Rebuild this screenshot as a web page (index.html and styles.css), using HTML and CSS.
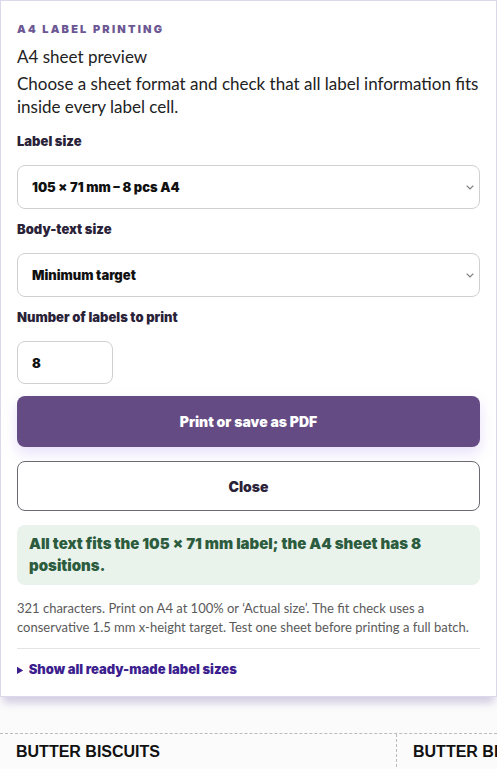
FILE: index.html
```html
<!DOCTYPE html>
<html lang="en">
<head>
    <meta charset="UTF-8">
    <meta name="viewport" content="width=device-width, initial-scale=1.0">
    <title>A4 label printing</title>
    <link rel="stylesheet" href="styles.css">
</head>
<body>
    <div class="panel">
        <p class="eyebrow">A4 LABEL PRINTING</p>
        <h2 class="title">A4 sheet preview</h2>
        <p class="intro">Choose a sheet format and check that all label information fits inside every label cell.</p>

        <label class="field-label" for="labelSize">Label size</label>
        <div class="select-wrap">
            <select id="labelSize" class="select">
                <option>105 × 71 mm – 8 pcs A4</option>
            </select>
            <svg class="chevron" width="8" height="5" viewBox="0 0 8 5"><path d="M.7.7L4 4 7.3.7" fill="none" stroke="#777" stroke-width="1.1"/></svg>
        </div>

        <label class="field-label" for="bodySize">Body-text size</label>
        <div class="select-wrap">
            <select id="bodySize" class="select">
                <option>Minimum target</option>
            </select>
            <svg class="chevron" width="8" height="5" viewBox="0 0 8 5"><path d="M.7.7L4 4 7.3.7" fill="none" stroke="#777" stroke-width="1.1"/></svg>
        </div>

        <label class="field-label" for="count">Number of labels to print</label>
        <input id="count" class="count" type="text" value="8">

        <button class="button primary">Print or save as PDF</button>
        <button class="button secondary">Close</button>

        <div class="fit-ok">All text fits the 105 × 71 mm label; the A4 sheet has 8 positions.</div>

        <p class="note">321 characters. Print on A4 at 100% or ‘Actual size’. The fit check uses a conservative 1.5 mm x-height target. Test one sheet before printing a full batch.</p>

        <details class="sizes">
            <summary>Show all ready-made label sizes</summary>
        </details>
    </div>

    <div class="sheet">
        <div class="cell"><h3>BUTTER BISCUITS</h3></div>
        <div class="cell"><h3>BUTTER BISCUITS</h3></div>
    </div>
</body>
</html>
```

FILE: styles.css
```css
body {
    margin: 0;
    background: #fbfbfb;
    font-family: Lato, "Open Sans", sans-serif;
    color: #222;
    overflow: hidden;
}
.panel {
    background: #fff;
    border: 1px solid #dcd8ea;
    padding: 21px 16px 18px;
    box-shadow: 0 9px 8px -3px rgba(120, 100, 170, 0.3);
}
.eyebrow {
    margin: 0;
    font: 900 11px Inter, sans-serif;
    letter-spacing: 0.2em;
    color: #6c5794;
}
.title {
    margin: 9px 0 0;
    font-size: 17px;
    font-weight: 400;
    line-height: 24px;
}
.intro {
    margin: 3px 0 15px;
    font-size: 17px;
    line-height: 23px;
}
.field-label {
    display: block;
    margin: 12px 0 16px;
    font: 900 13px/16px Inter, sans-serif;
    color: #2a2238;
}
.select-wrap {
    position: relative;
}
.select {
    appearance: none;
    width: 100%;
    height: 44px;
    padding: 0 14px;
    border: 1px solid #cfcfd4;
    border-radius: 8px;
    background: #fff;
    font: 900 13px Inter, sans-serif;
    color: #111;
}
.chevron {
    position: absolute;
    right: 6px;
    top: 20px;
}
.count {
    display: block;
    width: 96px;
    height: 43px;
    box-sizing: border-box;
    padding: 0 14px;
    border: 1px solid #cfcfd4;
    border-radius: 8px;
    font: 900 13px Inter, sans-serif;
    color: #111;
}
.button {
    display: block;
    width: 100%;
    border-radius: 8px;
    font: 900 14px Inter, sans-serif;
    cursor: pointer;
}
.primary {
    height: 51px;
    margin-top: 12px;
    border: none;
    background: #654b84;
    color: #fff;
    box-shadow: 0 6px 14px rgba(150, 110, 230, 0.22);
}
.secondary {
    height: 50px;
    margin-top: 14px;
    border: 1px solid #6a6a70;
    background: #fff;
    color: #2a2238;
}
.fit-ok {
    margin-top: 14px;
    padding: 8px 12px;
    border-radius: 8px;
    background: #e9f3ec;
    color: #2c5c3d;
    font: 900 15px/22px Inter, sans-serif;
}
.note {
    margin: 14px 0 0;
    padding-bottom: 11px;
    border-bottom: 1px solid #e4e4e8;
    font-size: 13px;
    line-height: 19px;
    color: #5a5a5a;
}
.sizes {
    margin-top: 12px;
}
.sizes summary {
    font: 900 13px/16px Inter, sans-serif;
    color: #3c1e8e;
    cursor: pointer;
}
.sizes summary::marker {
    font-size: 11px;
}
.sheet {
    display: grid;
    grid-template-columns: 396px 396px;
    margin-top: 36px;
    border-top: 1px dashed #bbb;
    overflow: hidden;
}
.cell {
    padding: 9px 16px;
    height: 120px;
}
.cell + .cell {
    border-left: 1px dashed #bbb;
}
.cell h3 {
    margin: 0;
    font: bold 16px "Liberation Sans", Arial, sans-serif;
    color: #111;
}
```
